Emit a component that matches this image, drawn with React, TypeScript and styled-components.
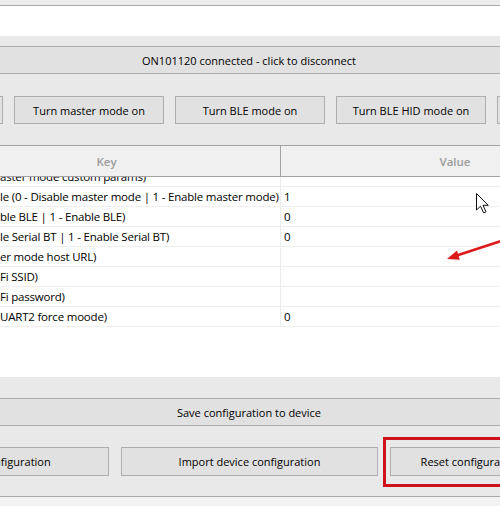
import { Fragment } from "react";
import styled, { createGlobalStyle } from "styled-components";

const GlobalStyle = createGlobalStyle`
  html, body {
    margin: 0;
    padding: 0;
    background: #ebebeb;
  }
  * {
    box-sizing: border-box;
  }
`;

const Window = styled.div`
  position: relative;
  width: 500px;
  height: 506px;
  overflow: hidden;
  background: #e9e9e9;
  font-family: "Open Sans", "Noto Sans", sans-serif;
  font-size: 11px;
  color: #000;
  display: flex;
  flex-direction: column;
`;

const TopStrip = styled.div`
  height: 6px;
  background: #ededed;
  border-bottom: 1px solid #a9a9a9;
`;

const InputArea = styled.div`
  height: 30px;
  background: #fff;
`;

const WideButton = styled.div<{ $top: number }>`
  margin: ${(p) => p.$top}px -20px 0 -22px;
  height: 28px;
  background: #e1e1e1;
  border: 1px solid #adadad;
  display: flex;
  align-items: center;
  justify-content: center;
`;

const ButtonRow = styled.div<{ $top: number; $shift: number; $gap: number }>`
  display: flex;
  gap: ${(p) => p.$gap}px;
  margin-top: ${(p) => p.$top}px;
  margin-left: ${(p) => p.$shift}px;
`;

const Button = styled.div<{ $w: number; $h: number }>`
  flex: 0 0 ${(p) => p.$w}px;
  height: ${(p) => p.$h}px;
  background: #e1e1e1;
  border: 1px solid #adadad;
  display: flex;
  align-items: center;
  justify-content: center;
  white-space: nowrap;
  overflow: hidden;
`;

const Table = styled.div`
  margin-top: 21px;
  overflow: hidden;
  background: #fff;
`;

const Grid = styled.div`
  display: grid;
  grid-template-columns: 348px 348px;
  margin-left: -67px;
`;

const HeaderCell = styled.div<{ $last?: boolean }>`
  height: 32px;
  background: #f0f0f0;
  border-top: 1px solid #a3a3a3;
  border-bottom: 1px solid #a3a3a3;
  border-right: ${(p) => (p.$last ? "none" : "1px solid #a3a3a3")};
  display: flex;
  align-items: center;
  justify-content: center;
  color: #9c9c9c;
  font-weight: 600;
  font-size: 11.5px;
`;

const Body = styled.div`
  height: 200px;
  overflow: hidden;
`;

const Rows = styled.div`
  display: grid;
  grid-template-columns: 348px 348px;
  margin-left: -67px;
  margin-top: -10px;
`;

const Cell = styled.div<{ $key?: boolean }>`
  height: 20px;
  border-bottom: 1px solid #efefef;
  border-right: ${(p) => (p.$key ? "1px solid #ececec" : "none")};
  padding-left: ${(p) => (p.$key ? 67 : 3)}px;
  font-size: 11.5px;
  letter-spacing: -0.2px;
  display: flex;
  align-items: center;
  white-space: nowrap;
  overflow: hidden;
`;

const BottomEdge = styled.div`
  margin-top: 20px;
  height: 1px;
  background: #a8a8a8;
`;

const Footer = styled.div`
  flex: 1;
  background: #f2f2f2;
`;

const Highlight = styled.div`
  position: absolute;
  left: 383px;
  top: 437px;
  width: 140px;
  height: 50px;
  border: 3.5px solid #cf111c;
  pointer-events: none;
`;

const Overlay = styled.svg`
  position: absolute;
  left: 0;
  top: 0;
  pointer-events: none;
`;

const rows: [string, string][] = [
  ["aster mode custom params)", ""],
  ["le (0 - Disable master mode | 1 - Enable master mode)", "1"],
  ["ble BLE | 1 - Enable BLE)", "0"],
  ["le Serial BT | 1 - Enable Serial BT)", "0"],
  ["er mode host URL)", ""],
  ["Fi SSID)", ""],
  ["Fi password)", ""],
  ["UART2 force moode)", "0"],
];

export default function App() {
  return (
    <Window>
      <GlobalStyle />
      <TopStrip />
      <InputArea />
      <WideButton $top={10}>ON101120 connected - click to disconnect</WideButton>

      <ButtonRow $top={22} $shift={-147} $gap={11}>
        <Button $w={150} $h={28}>Turn slave mode on</Button>
        <Button $w={150} $h={28}>Turn master mode on</Button>
        <Button $w={150} $h={28}>Turn BLE mode on</Button>
        <Button $w={150} $h={28}>Turn BLE HID mode on</Button>
        <Button $w={150} $h={28}>Turn Serial BT on</Button>
      </ButtonRow>

      <Table>
        <Grid>
          <HeaderCell>Key</HeaderCell>
          <HeaderCell $last>Value</HeaderCell>
        </Grid>
        <Body>
          <Rows>
            {rows.map(([k, v], i) => (
              <Fragment key={i}>
                <Cell $key>{k}</Cell>
                <Cell>{v}</Cell>
              </Fragment>
            ))}
          </Rows>
        </Body>
      </Table>

      <WideButton $top={21}>Save configuration to device</WideButton>

      <ButtonRow $top={21} $shift={-148} $gap={12}>
        <Button $w={257} $h={29}>Export device configuration</Button>
        <Button $w={257} $h={29}>Import device configuration</Button>
        <Button $w={257} $h={29}>Reset configuration to factory defaults</Button>
      </ButtonRow>

      <BottomEdge />
      <Footer />

      <Highlight />

      <Overlay width="500" height="506" viewBox="0 0 500 506">
        <line x1="503" y1="240.5" x2="456" y2="255.8" stroke="#dd1a1a" strokeWidth="2.6" />
        <polygon points="447,259 459.8,259.8 457,250.6" fill="#dd1a1a" />
        <path
          d="M476.5 193.5 L476.5 210 L480.5 206.2 L483.6 212.8 L486 211.8 L483 205.3 L488.3 205.3 Z"
          fill="#fff"
          stroke="#111"
          strokeWidth="1"
          strokeLinejoin="round"
        />
      </Overlay>
    </Window>
  );
}
